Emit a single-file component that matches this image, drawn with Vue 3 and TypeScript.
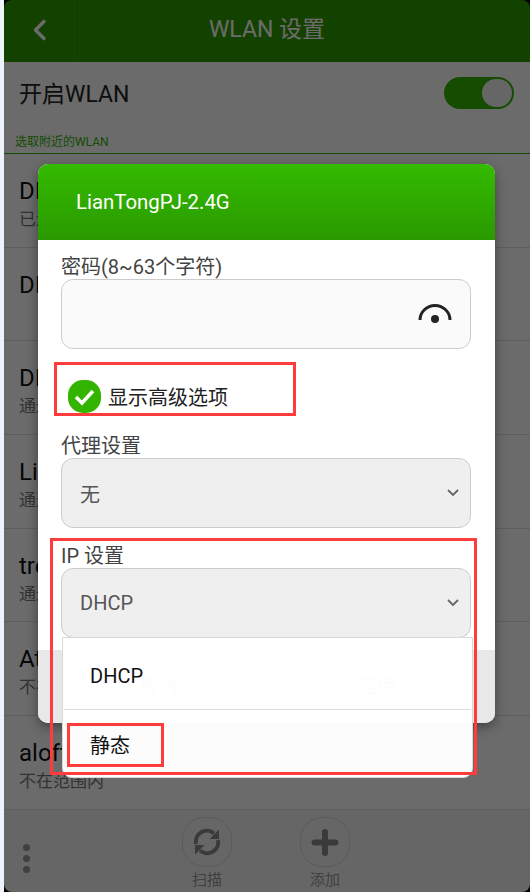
<script setup lang="ts">
const rows = [
  { name: 'DIRECT-1', sub: '已连接' },
  { name: 'DIRECT-2', sub: '' },
  { name: 'DIRECT-3', sub: '通过 WPA2 进行保护' },
  { name: 'LianTongPJ', sub: '通过 WPA2 进行保护' },
  { name: 'tre', sub: '通过 WPA2 进行保护' },
  { name: 'Atlas', sub: '不在范围内' },
  { name: 'aloft', sub: '不在范围内' },
]
</script>

<template>
  <div class="page">
    <div class="phone">
      <header class="appbar">
        <div class="back">
          <svg width="16" height="24" viewBox="0 0 16 24"><path d="M13 3.5 L4.5 12 L13 20.5" fill="none" stroke="#fff" stroke-width="3.4" stroke-linecap="round" stroke-linejoin="round" /></svg>
        </div>
        <div class="title">WLAN 设置</div>
      </header>
      <div class="switch-row">
        <span>开启WLAN</span>
        <div class="toggle"><i></i></div>
      </div>
      <div class="section">选取附近的WLAN</div>
      <ul class="list">
        <li v-for="row in rows" :key="row.name">
          <div class="name">{{ row.name }}</div>
          <div class="sub">{{ row.sub }}</div>
        </li>
      </ul>
      <footer class="bottom">
        <div class="dots"><i></i><i></i><i></i></div>
        <div class="action">
          <div class="round">
            <svg width="30" height="30" viewBox="0 0 30 30"><path d="M4 17 A11 11 0 0 1 22 6.5 M26 13 A11 11 0 0 1 8 23.5" fill="none" stroke="#8a8a8a" stroke-width="4" /><path d="M27 2.5 V12 H17.5 Z M3 27.5 V18 H12.5 Z" fill="#8a8a8a" /></svg>
          </div>
          <span>扫描</span>
        </div>
        <div class="action">
          <div class="round">
            <svg width="30" height="30" viewBox="0 0 30 30"><path d="M15 5 V26 M4.5 15.5 H25.5" stroke="#8a8a8a" stroke-width="6" stroke-linecap="round" /></svg>
          </div>
          <span>添加</span>
        </div>
      </footer>
      <div class="overlay"></div>
    </div>

    <div class="modal">
      <div class="modal-head">LianTongPJ-2.4G</div>
      <div class="modal-body">
        <label>密码(8~63个字符)</label>
        <div class="field input">
          <svg width="36" height="24" viewBox="0 0 36 24"><path d="M3 18 A15 14.5 0 0 1 33 18" fill="none" stroke="#222" stroke-width="3" /><circle cx="18" cy="17" r="4" fill="#222" /></svg>
        </div>
        <div class="check">
          <svg width="33" height="33" viewBox="0 0 33 33"><rect width="33" height="33" rx="15" fill="#33b500" /><path d="M8 17 L14 23 L25 11" fill="none" stroke="#fff" stroke-width="3.5" /></svg>
          <span>显示高级选项</span>
        </div>
        <label class="proxy">代理设置</label>
        <div class="field select"><span>无</span><svg class="chev" width="12" height="8" viewBox="0 0 12 8"><path d="M1 1 L6 6 L11 1" fill="none" stroke="#666" stroke-width="1.8" /></svg></div>
        <label class="ip">IP 设置</label>
        <div class="field select"><span>DHCP</span><svg class="chev" width="12" height="8" viewBox="0 0 12 8"><path d="M1 1 L6 6 L11 1" fill="none" stroke="#666" stroke-width="1.8" /></svg></div>
      </div>
      <div class="modal-foot"><span>取消</span><span>连接</span></div>
      <div class="menu">
        <div class="opt first">DHCP</div>
        <div class="opt second">静态</div>
      </div>
    </div>

    <div class="mark mark-a"></div>
    <div class="mark mark-b"></div>
    <div class="mark mark-c"></div>
  </div>
</template>

<style>
body {
  background: #eef3fb;
}
</style>

<style scoped>
.page {
  position: relative;
  width: 530px;
  height: 892px;
  overflow: hidden;
  font-family: Roboto, "Noto Sans CJK SC", sans-serif;
}
.phone {
  position: relative;
  margin-left: 4px;
  height: 892px;
  background: linear-gradient(#000 10px, #fff 10px, #fff 880px, #000 880px);
  overflow: hidden;
}
.overlay {
  position: absolute;
  inset: 0;
  background: rgba(0, 0, 0, 0.58);
}
.appbar {
  display: flex;
  height: 62px;
  background: #2f9e00;
  border-radius: 8px 8px 0 0;
  box-sizing: border-box;
}
.back {
  width: 71px;
  box-sizing: border-box;
  border-right: 1px solid #38a80a;
  display: flex;
  justify-content: center;
  align-items: center;
  padding-bottom: 2px;
}
.title {
  flex: 1;
  text-align: center;
  color: #fff;
  font-size: 23px;
  line-height: 60px;
  padding-right: 71px;
}
.switch-row {
  display: flex;
  justify-content: space-between;
  align-items: center;
  height: 62px;
  padding: 0 16px 0 15px;
  font-size: 23px;
  color: #222;
}
.switch-row span {
  padding-bottom: 3px;
}
.toggle {
  width: 70px;
  height: 32px;
  border-radius: 16px;
  background: #33b500;
  position: relative;
}
.toggle i {
  position: absolute;
  right: 2px;
  top: 2px;
  width: 30px;
  height: 28px;
  border-radius: 14px;
  background: #f4f4f4;
}
.section {
  height: 30px;
  padding: 11px 0 0 11px;
  box-sizing: border-box;
  font-size: 12px;
  line-height: 15px;
  color: #33b500;
  border-bottom: 1px solid #33b500;
}
.list {
  list-style: none;
  margin: 0;
  padding: 0;
}
.list li {
  height: 93.7px;
  box-sizing: border-box;
  border-bottom: 1px solid #e0e0e0;
  padding: 20px 0 0 15px;
}
.name {
  font-size: 24px;
  line-height: 34px;
  color: #111;
}
.sub {
  font-size: 17px;
  line-height: 22px;
  color: #777;
}
.bottom {
  display: flex;
  height: 82px;
  position: relative;
  padding-left: 178px;
  gap: 68px;
  background: #f3f3f3;
  border-radius: 0 0 8px 8px;
}
.dots {
  position: absolute;
  left: 19px;
  top: 34px;
  display: flex;
  flex-direction: column;
  gap: 4px;
}
.dots i {
  width: 7px;
  height: 7px;
  border-radius: 50%;
  background: #999;
}
.action {
  display: flex;
  flex-direction: column;
  align-items: center;
  padding-top: 7px;
  font-size: 15px;
  color: #999;
  line-height: 20px;
}
.action span {
  margin-top: 3px;
}
.round {
  box-sizing: border-box;
  width: 50px;
  height: 50px;
  border: 1px solid #d8d8d8;
  border-radius: 22px;
  display: flex;
  align-items: center;
  justify-content: center;
}
.modal {
  position: absolute;
  left: 38px;
  top: 164px;
  width: 457px;
  height: 559px;
  background: #fff;
  border-radius: 10px;
  box-shadow: 0 4px 12px rgba(0, 0, 0, 0.4);
}
.modal-head {
  height: 76px;
  background: linear-gradient(#34bb00, #2a9900);
  border-radius: 10px 10px 0 0;
  color: #fff;
  font-size: 20.4px;
  line-height: 76px;
  padding-left: 38px;
}
.modal-body {
  padding: 12px 24px 0 23px;
}
.modal-body label {
  display: block;
  font-size: 20px;
  padding-top: 4px;
  line-height: 23px;
  color: #444;
}
.field {
  box-sizing: border-box;
  height: 70px;
  border: 1px solid #ccc;
  border-radius: 12px;
  display: flex;
  align-items: center;
  justify-content: space-between;
}
.input {
  background: #fafafa;
  justify-content: flex-end;
  padding-right: 17px;
}
.select {
  background: #efefef;
  padding: 0 11px 0 18px;
  font-size: 20px;
  color: #555;
}
.check {
  display: flex;
  align-items: center;
  gap: 7px;
  height: 33px;
  margin: 31px 0 0 7px;
  font-size: 20px;
  color: #222;
}
.check span {
  padding-bottom: 1px;
}
.proxy {
  margin-top: 18px;
}
.ip {
  margin-top: 13px;
}
.modal-foot {
  position: absolute;
  left: 0;
  right: 0;
  bottom: 0;
  height: 73px;
  background: #e8e8e8;
  border-radius: 0 0 10px 10px;
  color: #777;
  font-size: 19px;
  line-height: 74px;
  padding-left: 102px;
  box-sizing: border-box;
  display: flex;
  gap: 180px;
}
.menu {
  position: absolute;
  left: 24px;
  top: 473px;
  width: 411px;
  background: rgba(255, 255, 255, 0.98);
  border: 1px solid #d8d8d8;
  border-radius: 0 0 10px 10px;
  box-sizing: border-box;
  font-size: 20px;
  color: #111;
}
.opt {
  box-sizing: border-box;
  padding-left: 27px;
}
.first {
  height: 72px;
  line-height: 76px;
  margin: 0 1px;
  padding-left: 26px;
  border-bottom: 1px solid #ddd;
}
.second {
  height: 67px;
  line-height: 72px;
}
.mark {
  position: absolute;
  border: 3px solid #ff3b3b;
  box-sizing: border-box;
}
.mark-a {
  left: 54px;
  top: 362px;
  width: 242px;
  height: 54px;
}
.mark-b {
  left: 50px;
  top: 538px;
  width: 427px;
  height: 237px;
}
.mark-c {
  left: 67px;
  top: 723px;
  width: 97px;
  height: 44px;
}
</style>
